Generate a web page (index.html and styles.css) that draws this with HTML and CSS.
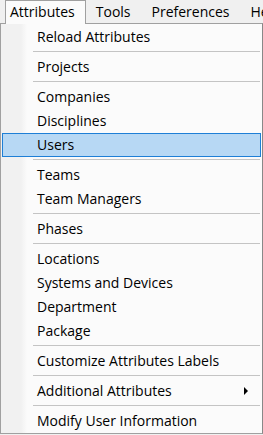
FILE: index.html
```html
<!DOCTYPE html>
<html lang="en">
<head>
  <meta charset="UTF-8" />
  <title>Attributes Menu</title>
  <link rel="stylesheet" href="styles.css">
</head>
<body>

  <!-- Menu bar -->
  <nav class="menubar">
    <span class="menu-item active">Attributes</span>
    <span class="menu-item">Tools</span>
    <span class="menu-item">Preferences</span>
    <span class="menu-item">Help</span>
  </nav>

  <!-- Dropdown -->
  <ul class="dropdown">
    <li class="item">Reload Attributes</li>
    <li class="sep"></li>
    <li class="item">Projects</li>
    <li class="sep"></li>
    <li class="item">Companies</li>
    <li class="item">Disciplines</li>
    <li class="item selected">Users</li>
    <li class="sep"></li>
    <li class="item">Teams</li>
    <li class="item">Team Managers</li>
    <li class="sep"></li>
    <li class="item">Phases</li>
    <li class="sep"></li>
    <li class="item">Locations</li>
    <li class="item">Systems and Devices</li>
    <li class="item">Department</li>
    <li class="item">Package</li>
    <li class="sep"></li>
    <li class="item">Customize Attributes Labels</li>
    <li class="sep"></li>
    <li class="item submenu">Additional Attributes <span class="arrow"></span></li>
    <li class="sep"></li>
    <li class="item">Modify User Information</li>
  </ul>

</body>
</html>
```

FILE: styles.css
```css
body {
  margin: 0;
  width: 263px;
  height: 435px;
  overflow: hidden;
  background-color: #f0f0f0;
  font-family: "Open Sans", "Noto Sans", sans-serif;
  font-size: 14px;
  color: #000;
}

/* Menu bar */
.menubar {
  display: flex;
  height: 23px;
  padding-left: 5px;
  background-color: #f0f0f0;
  white-space: nowrap;
}

.menu-item {
  box-sizing: border-box;
  height: 23px;
  line-height: 22px;
  padding: 0 10px 0 9px;
  border: 1px solid transparent;
  border-bottom: none;
}

.menu-item.active {
  width: 81px;
  padding-left: 4px;
  background-color: #fbfbfb;
  border-color: #a0a0a0;
  height: 24px;
  position: relative;
  z-index: 2;
}

/* Dropdown */
.dropdown {
  list-style: none;
  margin: 0;
  padding: 1px 0 0 0;
  width: 263px;
  box-sizing: border-box;
  border: 1px solid #a0a0a0;
  border-right-color: #888;
  background: linear-gradient(to right, #f1f1f1 0, #f1f1f1 20px, #fbfbfb 26px);
}

.item {
  position: relative;
  box-sizing: border-box;
  height: 24px;
  line-height: 22px;
  margin: 0 1px;
  padding-left: 34px;
  border: 1px solid transparent;
  white-space: nowrap;
}

.item.selected {
  background-color: #b7d8f4;
  border-color: #1e7fd6;
}

.sep {
  height: 1px;
  margin: 2px 2px 3px 32px;
  background-color: #c4c4c4;
}

.arrow {
  position: absolute;
  right: 12px;
  top: 7px;
  width: 0;
  height: 0;
  border-top: 4px solid transparent;
  border-bottom: 4px solid transparent;
  border-left: 4px solid #000;
}
```
